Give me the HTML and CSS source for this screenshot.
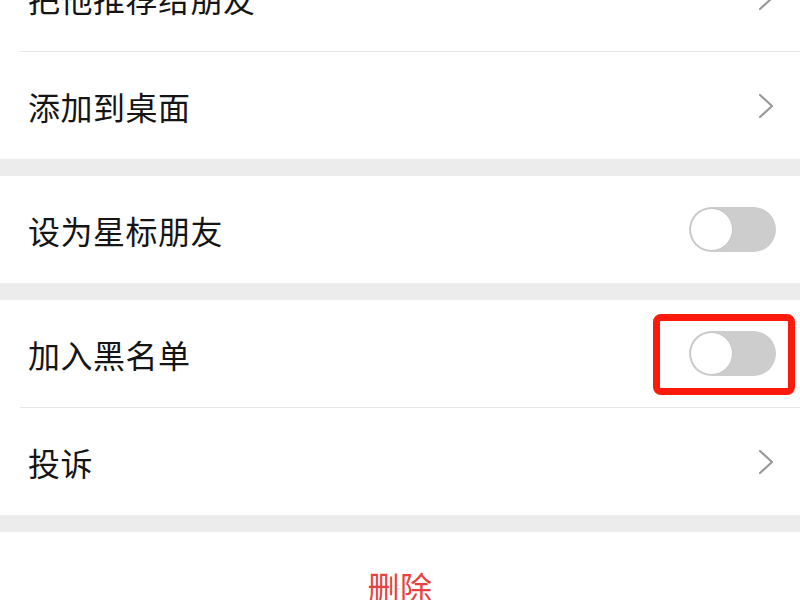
FILE: index.html
```html
<!DOCTYPE html>
<html lang="zh-CN">
<head>
<meta charset="utf-8">
<title>资料设置</title>
<link rel="stylesheet" href="styles.css">
</head>
<body>
<div class="page">
  <section class="group">
    <div class="row">
      <span class="label">把他推荐给朋友</span>
      <svg class="chev" viewBox="0 0 16 26" width="16" height="26"><polyline points="2,2 14,13 2,24"/></svg>
    </div>
    <div class="divider"></div>
    <div class="row">
      <span class="label">添加到桌面</span>
      <svg class="chev" viewBox="0 0 16 26" width="16" height="26"><polyline points="2,2 14,13 2,24"/></svg>
    </div>
  </section>
  <div class="band"></div>
  <section class="group">
    <div class="row">
      <span class="label">设为星标朋友</span>
      <span class="toggle"><span class="knob"></span></span>
    </div>
  </section>
  <div class="band"></div>
  <section class="group">
    <div class="row">
      <span class="label">加入黑名单</span>
      <span class="toggle"><span class="knob"></span><span class="highlight"></span></span>
    </div>
    <div class="divider"></div>
    <div class="row">
      <span class="label">投诉</span>
      <svg class="chev" viewBox="0 0 16 26" width="16" height="26"><polyline points="2,2 14,13 2,24"/></svg>
    </div>
  </section>
  <div class="band"></div>
  <section class="group">
    <div class="row row-center">
      <span class="danger">删除</span>
    </div>
  </section>
</div>
</body>
</html>
```

FILE: styles.css
```css
html, body {
  margin: 0;
  padding: 0;
  background: #ffffff;
  overflow: hidden;
}

body {
  font-family: "Noto Sans CJK SC", "Noto Sans", sans-serif;
  color: #151515;
}

.page {
  margin-top: -56px;
  display: flex;
  flex-direction: column;
}

.group {
  background: #ffffff;
  display: flex;
  flex-direction: column;
}

.row {
  height: 107px;
  display: flex;
  align-items: center;
  justify-content: space-between;
  padding: 0 24px 0 28px;
}

.row-center {
  justify-content: center;
  padding: 0;
}

.label {
  font-size: 32px;
  letter-spacing: 0.5px;
  line-height: 1;
}

.danger {
  font-size: 32px;
  line-height: 1;
  color: #e64340;
  letter-spacing: 0.5px;
}

.divider {
  height: 1px;
  background: #e6e6e6;
  margin-left: 20px;
}

.band {
  height: 17px;
  background: #ececec;
}

.chev {
  margin-right: 2px;
  fill: none;
  stroke: #9a9a9a;
  stroke-width: 2.2;
  stroke-linecap: round;
  stroke-linejoin: round;
}

.toggle {
  position: relative;
  width: 87px;
  height: 45px;
  border-radius: 23px;
  background: #cdcdcd;
  display: flex;
  align-items: center;
}

.knob {
  width: 41px;
  height: 41px;
  margin-left: 1px;
  border-radius: 50%;
  background: #ffffff;
  border: 1.5px solid #c4c4c4;
  box-sizing: content-box;
}

.highlight {
  position: absolute;
  left: -36px;
  top: -17px;
  right: -19px;
  bottom: -19px;
  border: 7px solid #fb1a0c;
  border-radius: 8px;
}
```
